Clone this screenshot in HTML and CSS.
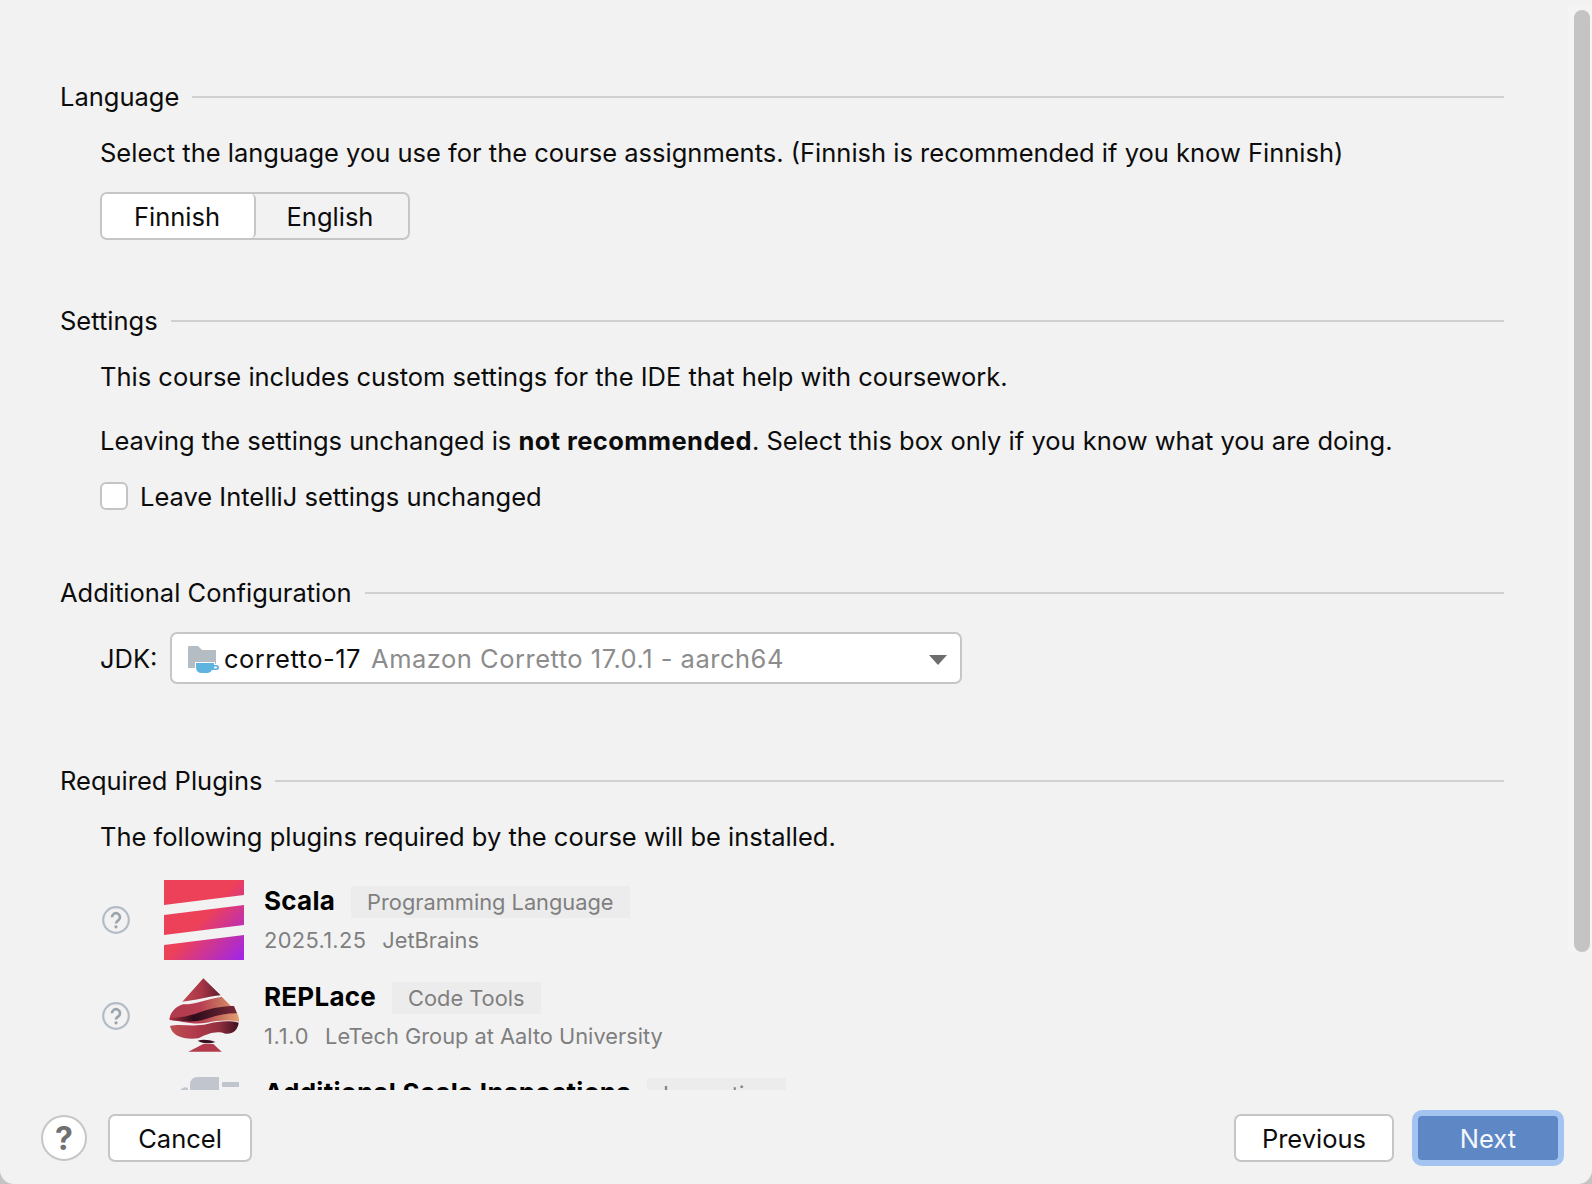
FILE: index.html
```html
<!DOCTYPE html>
<html lang="en">
<head>
<meta charset="utf-8">
<title>Course settings</title>
<link rel="stylesheet" href="styles.css">
</head>
<body>
<div class="window">
  <main class="content">
    <section class="group">
      <div class="group-title"><span>Language</span><i class="rule"></i></div>
      <div class="body">
        <p class="line first">Select the language you use for the course assignments. (Finnish is recommended if you know Finnish)</p>
        <div class="segmented">
          <div class="seg seg-on">Finnish</div>
          <div class="seg seg-off">English</div>
        </div>
      </div>
    </section>

    <section class="group gap-settings">
      <div class="group-title"><span>Settings</span><i class="rule"></i></div>
      <div class="body">
        <p class="line first">This course includes custom settings for the IDE that help with coursework.</p>
        <p class="line second">Leaving the settings unchanged is <b>not recommended</b>. Select this box only if you know what you are doing.</p>
        <label class="check"><span class="box"></span><span>Leave IntelliJ settings unchanged</span></label>
      </div>
    </section>

    <section class="group gap-config">
      <div class="group-title"><span>Additional Configuration</span><i class="rule"></i></div>
      <div class="body jdk-row">
        <span class="jdk-label">JDK:</span>
        <div class="combo">
          <svg class="folder" width="32" height="30" viewBox="0 0 32 30">
            <path d="M0 4a1 1 0 0 1 1-1h9l4 4h14v18H0z" fill="#b4bcc4"/>
            <path d="M8 20h18v2h2.500a2.500 2.500 0 0 1 0 5H24q-1.500 3-4 3h-6q-6 0-6-6z" fill="#5fb3e0" stroke="#fff" stroke-width="2" paint-order="stroke"/>
            <rect x="26" y="23.600" width="3" height="1.800" rx=".9" fill="#fff"/>
          </svg>
          <span class="jdk-name">corretto-17</span>
          <span class="jdk-desc">Amazon Corretto 17.0.1 - aarch64</span>
          <i class="arrow"></i>
        </div>
      </div>
    </section>

    <section class="group gap-plugins">
      <div class="group-title"><span>Required Plugins</span><i class="rule"></i></div>
      <div class="body">
        <p class="line first">The following plugins required by the course will be installed.</p>
        <div class="plugins">
          <div class="plugin">
            <svg class="q" width="28" height="28" viewBox="0 0 28 28"><circle cx="14" cy="14" r="12.800" fill="none" stroke="#b3bcc4" stroke-width="2.200"/><path d="M10 11.200a4 4 0 1 1 6.300 3.200c-1.500 1-2.300 1.700-2.300 3.200" fill="none" stroke="#98a3ac" stroke-width="2.600"/><circle cx="14" cy="20.800" r="1.600" fill="#98a3ac"/></svg>
            <svg class="logo" width="80" height="80" viewBox="0 0 80 80">
              <defs><linearGradient id="sc" gradientUnits="userSpaceOnUse" x1="38" y1="40" x2="80" y2="78"><stop offset="0" stop-color="#ed4059"/><stop offset="1" stop-color="#a026e8"/></linearGradient></defs>
              <path fill="url(#sc)" d="M0 0H80V15L0 25zM0 35L80 25V45L0 55zM0 65L80 55V80H0z"/>
            </svg>
            <div class="info">
              <div class="title-row"><b class="name">Scala</b><span class="chip">Programming Language</span></div>
              <div class="sub"><span class="ver">2025.1.25</span><span>JetBrains</span></div>
            </div>
          </div>
          <div class="plugin">
            <svg class="q" width="28" height="28" viewBox="0 0 28 28"><circle cx="14" cy="14" r="12.800" fill="none" stroke="#b3bcc4" stroke-width="2.200"/><path d="M10 11.200a4 4 0 1 1 6.300 3.200c-1.500 1-2.300 1.700-2.300 3.200" fill="none" stroke="#98a3ac" stroke-width="2.600"/><circle cx="14" cy="20.800" r="1.600" fill="#98a3ac"/></svg>
            <svg class="logo" width="80" height="80" viewBox="42 18 240 240">
              <defs>
                <linearGradient id="sp1" x1="0" y1="0" x2="1" y2="0"><stop offset="0" stop-color="#c14a52"/><stop offset=".5" stop-color="#a83545"/><stop offset="1" stop-color="#5e1c2c"/></linearGradient>
                <linearGradient id="sp2" x1="0" y1="0" x2="1" y2="0"><stop offset="0" stop-color="#b03a4c"/><stop offset=".45" stop-color="#b83e52"/><stop offset=".75" stop-color="#c9745f"/><stop offset="1" stop-color="#e4a070"/></linearGradient>
                <linearGradient id="sp3" x1="0" y1="0" x2="1" y2="0"><stop offset="0" stop-color="#bc5250"/><stop offset=".35" stop-color="#b23a4c"/><stop offset=".7" stop-color="#93303f"/><stop offset="1" stop-color="#401222"/></linearGradient>
                <linearGradient id="sp4" x1="0" y1="0" x2="1" y2="0"><stop offset="0" stop-color="#a8303f"/><stop offset=".35" stop-color="#2a0c1a"/><stop offset="1" stop-color="#7a2838"/></linearGradient>
              </defs>
              <path fill="url(#sp1)" d="M160 25L212 76C175 79 135 92 97 95Z"/>
              <path fill="url(#sp2)" d="M100 103C140 103 175 86 215 80L252 117C262 127 268 140 267 155C240 150 205 150 170 158C130 166 90 152 58 149C60 128 78 108 100 103Z"/>
              <path fill="url(#sp4)" d="M60 144C110 143 140 130 170 120C200 111 230 108 252 108L261 130C225 130 195 138 165 148C130 159 95 153 60 150Z"/>
              <path fill="url(#sp3)" d="M60 168C90 160 130 172 172 162C205 153 240 151 266 158C264 178 250 193 226 191C200 180 170 192 145 205C105 210 66 200 60 168Z"/>
              <path fill="#3a1020" d="M143 212C160 207 180 210 196 216C180 222 160 222 143 212Z"/>
              <path fill="#b23a4c" d="M115 245L160 222L190 222L215 245Z"/>
            </svg>
            <div class="info">
              <div class="title-row"><b class="name">REPLace</b><span class="chip">Code Tools</span></div>
              <div class="sub"><span class="ver ver-short">1.1.0</span><span>LeTech Group at Aalto University</span></div>
            </div>
          </div>
          <div class="plugin">
            <span class="q-space"></span>
            <svg class="logo" width="80" height="80" viewBox="0 0 80 80">
              <path fill="#c0c5ce" d="M26 24V13Q26 5 34 5H55V24zM58 10H75V15H58z"/><path fill="#c0c5ce" d="M16 24a6 6 0 0 1 8-8v8z"/>
            </svg>
            <div class="info">
              <div class="title-row"><b class="name">Additional Scala Inspections</b><span class="chip">Inspection</span></div>
            </div>
          </div>
        </div>
      </div>
    </section>
  </main>

  <footer class="footer">
    <div class="help">?</div>
    <button class="btn cancel">Cancel</button>
    <span class="spring"></span>
    <button class="btn previous">Previous</button>
    <button class="btn next">Next</button>
  </footer>

  <div class="scrollbar"><div class="thumb"></div></div>
</div>
</body>
</html>
```
FILE: styles.css
```css
* { box-sizing: border-box; }
html, body { margin: 0; padding: 0; height: 100%; }
body { background: #c4c4c4; font-family: Inter, "Noto Sans", sans-serif; font-size: 25.5px; color: #0c0c0c; overflow: hidden; }
.window { position: relative; width: 1592px; height: 1184px; background: #f2f2f2; border-radius: 0 0 14px 14px; display: flex; flex-direction: column; overflow: hidden; }
.content { height: 1090px; overflow: hidden; flex: none; padding: 85px 88px 0 60px; }
.group-title { display: flex; align-items: center; height: 24px; line-height: 24px; }
.rule { flex: 1; height: 2px; background: #d0d0d0; margin-left: 13px; }
.body { padding-left: 40px; }
.line { margin: 0; height: 24px; line-height: 24px; white-space: nowrap; }
.first { margin-top: 32px; }
.second { margin-top: 40px; }
.line b { font-weight: 700; letter-spacing: .4px; }
.segmented { display: flex; margin-top: 27px; width: 310px; height: 48px; border: 2px solid #c6c6c6; border-radius: 7px; }
.seg { display: flex; align-items: center; justify-content: center; }
.seg-on { width: 154px; padding-right: 2px; background: #fff; border-right: 2px solid #c6c6c6; border-radius: 5px; }
.seg-off { flex: 1; padding-right: 4px; }
.gap-settings { margin-top: 69px; }
.gap-config { margin-top: 72px; }
.gap-plugins { margin-top: 85px; }
.check { display: flex; align-items: center; gap: 12px; margin-top: 30px; height: 26px; }
.box { width: 28px; height: 28px; background: #fff; border: 2px solid #c4c4c4; border-radius: 6px; }
.jdk-row { display: flex; align-items: center; margin-top: 27px; }
.jdk-label { width: 70px; }
.combo { position: relative; display: flex; align-items: center; width: 792px; height: 52px; background: #fff; border: 2px solid #c6c6c6; border-radius: 7px; padding-left: 16px; }
.folder { flex: none; margin-right: 4px; }
.jdk-name, .jdk-desc { letter-spacing: .5px; }
.jdk-desc { color: #8c8c8c; margin-left: 10px; }
.arrow { position: absolute; right: 13px; top: 21px; width: 0; height: 0; border-left: 9px solid transparent; border-right: 9px solid transparent; border-top: 10px solid #6e6e6e; }
.plugins { margin-top: 31px; }
.plugin { display: flex; height: 96px; align-items: flex-start; }
.q { flex: none; margin: 26px 0 0 2px; }
.q-space { flex: none; width: 30px; }
.logo { flex: none; margin-left: 34px; }
.info { margin-left: 20px; padding-top: 6px; }
.title-row { display: flex; align-items: center; height: 32px; }
.name { font-weight: 700; font-size: 26px; letter-spacing: .25px; color: #000; margin-bottom: 4px; }
.chip { margin-left: 16px; height: 32px; line-height: 32px; padding: 0 16px; background: #ececec; color: #7f7f7f; font-size: 21.8px; }
.sub { display: flex; gap: 16px; margin-top: 10px; height: 24px; line-height: 24px; color: #7f7f7f; font-size: 21.8px; }
.ver { letter-spacing: .35px; }
.ver-short { letter-spacing: .7px; }
.footer { flex: 1; position: relative; display: flex; align-items: center; padding: 2px 28px 0 41px; }
.help { width: 46px; height: 46px; border-radius: 50%; background: #fff; border: 2px solid #c6c6c6; display: flex; align-items: center; justify-content: center; font-size: 32px; font-weight: 700; color: #707070; }
.btn { font: inherit; color: #0c0c0c; height: 48px; background: #fff; border: 2px solid #c6c6c6; border-radius: 7px; padding: 0; }
.cancel { width: 144px; margin-left: 21px; }
.spring { flex: 1; }
.previous { width: 160px; margin-right: 18px; }
.next { width: 152px; height: 56px; background: #5d88c5; color: #f4f7fc; border: 6px solid #a3c3f0; border-radius: 10px; }
.scrollbar { position: absolute; top: 4px; right: 0; width: 24px; bottom: 232px; background: #f4f4f4; }
.thumb { position: absolute; left: 6px; top: 6px; width: 16px; bottom: 0; background: #c4c4c4; border-radius: 8px; }
```
